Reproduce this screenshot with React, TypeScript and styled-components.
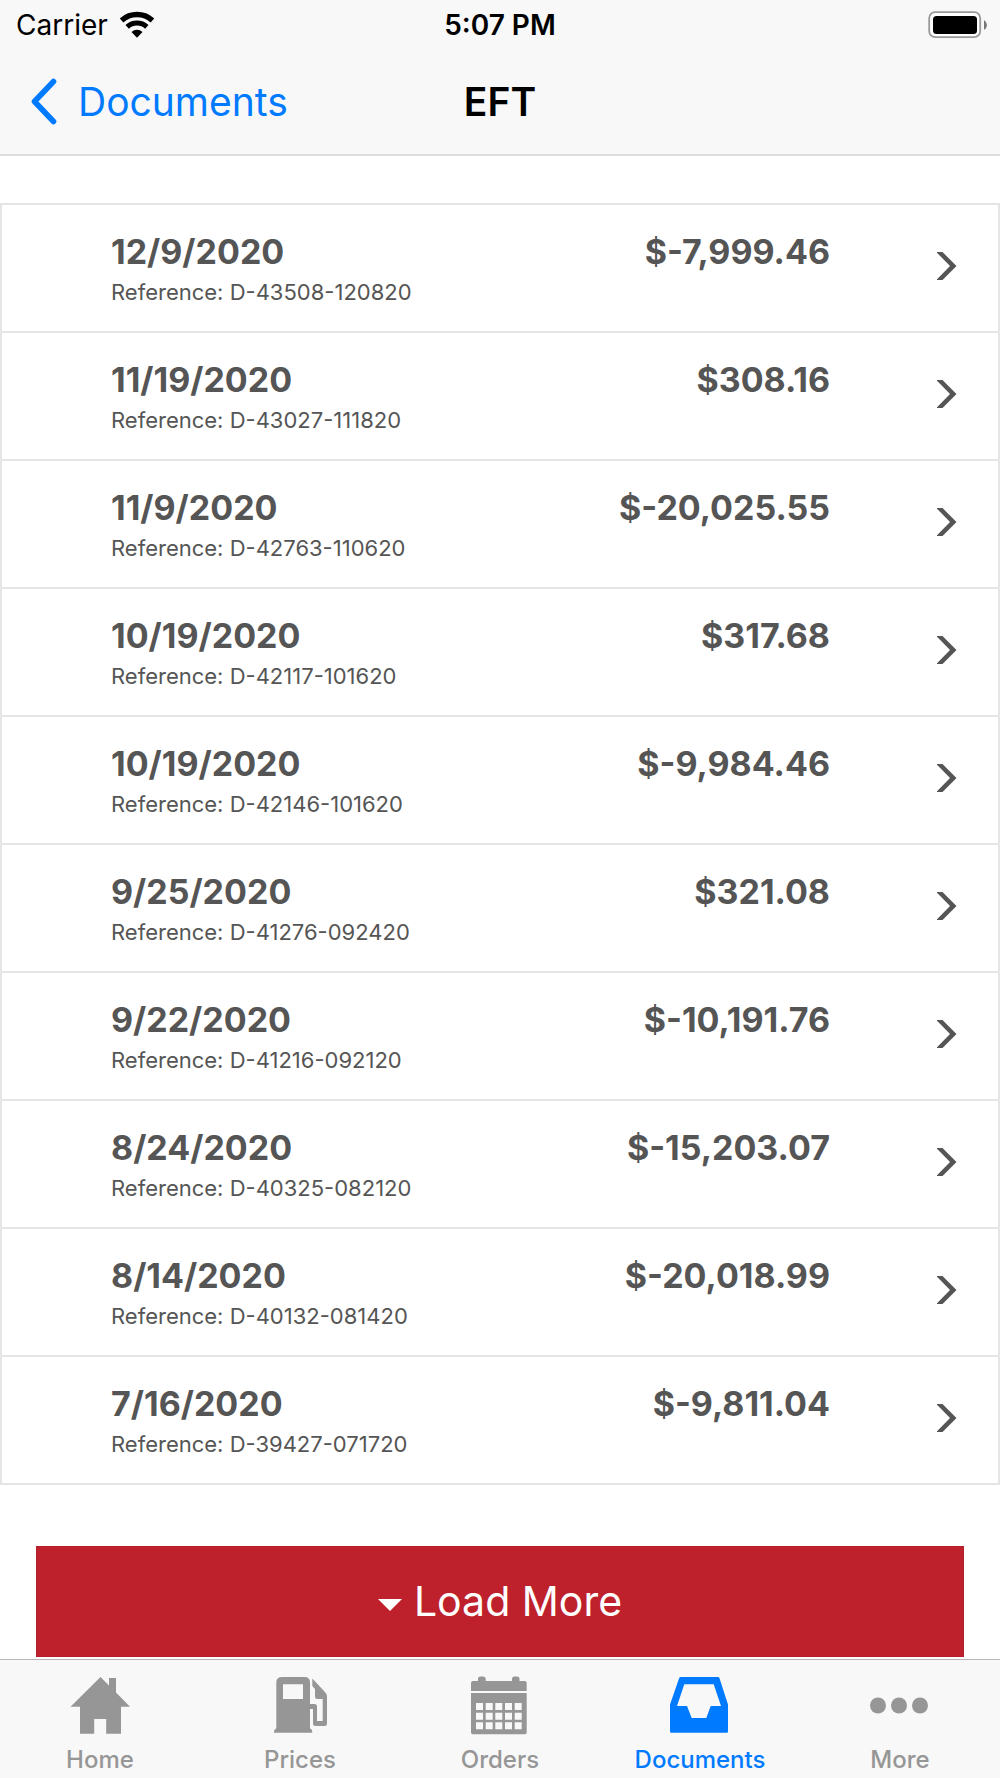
import React from "react";
import styled, { createGlobalStyle } from "styled-components";

const GlobalStyle = createGlobalStyle`
  *, *::before, *::after { box-sizing: border-box; }
  body {
    margin: 0;
    background: #fff;
    color: #000;
    font-family: Inter, "Liberation Sans", sans-serif;
  }
`;

const Screen = styled.div`
  min-height: 100vh;
  display: flex;
  flex-direction: column;
`;

const Header = styled.header`
  background: #f8f8f8;
  border-bottom: 2px solid #dcdcdc;
`;

const StatusBar = styled.div`
  display: grid;
  grid-template-columns: 1fr auto 1fr;
  align-items: center;
  height: 50px;
  padding: 0 12px;
  font-size: 28px;
  line-height: 32px;
`;

const Carrier = styled.div`
  display: flex;
  align-items: center;
  gap: 12px;
  padding-left: 4px;
`;

const Clock = styled.time`
  font-weight: 600;
`;

const BatterySlot = styled.div`
  display: flex;
  justify-content: flex-end;
`;

const NavBar = styled.nav`
  display: grid;
  grid-template-columns: 1fr auto 1fr;
  align-items: center;
  height: 104px;
  padding: 0 30px;
  font-size: 39px;
  line-height: 48px;
`;

const BackLink = styled.a`
  display: flex;
  align-items: center;
  gap: 20px;
  color: #007aff;
  text-decoration: none;
`;

const Title = styled.h1`
  margin: 0;
  font-size: inherit;
  font-weight: 600;
`;

const Content = styled.main`
  flex: 1;
  display: flex;
  flex-direction: column;
  padding: 47px 0 2px;
`;

const PaymentList = styled.ul`
  margin: 0;
  padding: 0;
  list-style: none;
  border: 2px solid #e5e5e5;
  border-bottom: 0;
`;

const PaymentItem = styled.li`
  border-bottom: 2px solid #e5e5e5;
`;

const PaymentLink = styled.a`
  display: grid;
  grid-template-columns: 1fr auto 20px;
  align-items: center;
  height: 126px;
  padding: 0 41px 4px 109px;
  color: #555;
  text-decoration: none;
`;

const PaymentInfo = styled.div`
  display: flex;
  flex-direction: column;
  padding-top: 8px;
`;

const Strong = styled.span`
  font-size: 34px;
  line-height: 44px;
  font-weight: 700;
`;

const Amount = styled(Strong)`
  align-self: start;
  margin: 25px 107px 0 0;
`;

const Reference = styled.span`
  font-size: 22px;
  line-height: 36px;
`;

const LoadMore = styled.button`
  display: flex;
  align-items: center;
  justify-content: center;
  gap: 12px;
  height: 111px;
  margin: 61px 36px 0;
  padding-bottom: 2px;
  border: 1px solid #b21e29;
  border-radius: 0;
  background: #be212b;
  color: #fff;
  font-family: inherit;
  font-size: 41px;
  line-height: 52px;
`;

const Caret = styled.span`
  border: 12px solid transparent;
  border-top-color: #fff;
  border-bottom: 0;
  margin-top: 8px;
`;

const TabBar = styled.nav`
  position: sticky;
  bottom: 0;
  display: grid;
  grid-template-columns: repeat(5, 1fr);
  height: 119px;
  border-top: 1px solid #b8b8b8;
  background: #f8f8f8;
`;

const Tab = styled.a<{ $active?: boolean }>`
  display: flex;
  flex-direction: column;
  align-items: center;
  gap: 8px;
  padding-top: 16px;
  color: ${({ $active }) => ($active ? "#007aff" : "#969696")};
  font-size: 24px;
  line-height: 32px;
  font-weight: 500;
  text-decoration: none;
`;

const WifiIcon = () => (
  <svg width="34" height="28" viewBox="0 0 34 28" aria-hidden="true">
    <g fill="none" stroke="#000">
      <path d="M1.5 9.5A23 23 0 0 1 32.5 9.5" strokeWidth="5.5" />
      <path d="M7.2 15.8A14.5 14.5 0 0 1 26.8 15.8" strokeWidth="5" />
    </g>
    <path d="M11.5 21A8 8 0 0 1 22.5 21L17 26.8Z" />
  </svg>
);

const BatteryIcon = () => (
  <svg width="60" height="28" viewBox="0 0 60 28" role="img" aria-label="Battery full">
    <rect x="1.2" y="1.2" width="51" height="25" rx="6" fill="#fff" stroke="#999" strokeWidth="1.8" />
    <rect x="5" y="5" width="44" height="18" rx="3.5" />
    <path d="M56 9Q59 11 59 14T56 19Z" fill="#777" />
  </svg>
);

const BackIcon = () => (
  <svg width="28" height="48" viewBox="0 0 28 48" aria-hidden="true">
    <path d="M22.5 3.5L3.5 23.5L22.5 43.5" fill="none" stroke="currentColor" strokeWidth="5.6" strokeLinecap="round" strokeLinejoin="round" transform="translate(1 0)" />
  </svg>
);

const RowChevron = () => (
  <svg width="20" height="28" viewBox="0 0 20 28" aria-hidden="true">
    <path d="M0 0H5.5L19.5 14L5.5 28H0V27.2L13 14L0 .8Z" fill="currentColor" />
  </svg>
);

const TabSvg = ({ children }: { children: React.ReactNode }) => (
  <svg width="60" height="60" viewBox="0 0 60 60" fill="currentColor" fillRule="evenodd" aria-hidden="true">
    {children}
  </svg>
);

const HomeIcon = () => (
  <TabSvg>
    <path d="M30.5 1L39 9.5V2H46V16.5L60 30.7H51V57.7H36.2V43H24.2V57.7H10V30.7H.5Z" />
  </TabSvg>
);

const PricesIcon = () => (
  <TabSvg>
    <path d="M6.3 6.5Q6.3 1 12 1H34.5Q40 1 40 6.5V52.5Q42.3 53 42.3 56.7H4Q4 53 6.3 52.5ZM13 8.2V23H33V8.2Z" />
    <path d="M40 28H44.5Q47 28 47 30.5V45H52.7V23H47.5Q45 23 45 20.5V13L42.3 10V2.5L54 15Q57 18 57 20V47.5Q57 50 54.5 50H45.5Q43 50 43 47.5V33H40Z" />
  </TabSvg>
);

const cellColumns = [6, 15.7, 25.3, 35, 44.7];
const cellRows = [27, 36.7, 46.3];
const calendarCells = cellRows.flatMap((y) => cellColumns.map((x) => `M${x} ${y}h7v7h-7Z`)).join("");

const OrdersIcon = () => (
  <TabSvg>
    <path d="M1 15V7Q1 5 3 5H8V3Q8 .5 10.5 .5H13Q15.7 .5 15.7 3V5H42V3Q42 .5 44.5 .5H47Q49.5 .5 49.5 3V5H54.7Q56.7 5 56.7 7V15Z" />
    <path d={`M1 17H56.7V56.5Q56.7 58.3 55 58.3H2.7Q1 58.3 1 56.5Z${calendarCells}`} />
  </TabSvg>
);

const DocumentsIcon = () => (
  <TabSvg>
    <path d="M11 1H48Q49 1 49.4 2L58 28.5V55.5Q58 56.7 56.8 56.7H1.2Q0 56.7 0 55.5V28.5L9.2 2Q9.6 1 11 1ZM14.3 8.3L7 30H17L21.7 42H36.3L40.7 30H51L43.7 8.3Z" />
  </TabSvg>
);

const MoreIcon = () => (
  <TabSvg>
    <circle cx="8" cy="29.5" r="8" />
    <circle cx="29" cy="29.5" r="8" />
    <circle cx="50" cy="29.5" r="8" />
  </TabSvg>
);

const payments = [
  { date: "12/9/2020", reference: "D-43508-120820", amount: "$-7,999.46" },
  { date: "11/19/2020", reference: "D-43027-111820", amount: "$308.16" },
  { date: "11/9/2020", reference: "D-42763-110620", amount: "$-20,025.55" },
  { date: "10/19/2020", reference: "D-42117-101620", amount: "$317.68" },
  { date: "10/19/2020", reference: "D-42146-101620", amount: "$-9,984.46" },
  { date: "9/25/2020", reference: "D-41276-092420", amount: "$321.08" },
  { date: "9/22/2020", reference: "D-41216-092120", amount: "$-10,191.76" },
  { date: "8/24/2020", reference: "D-40325-082120", amount: "$-15,203.07" },
  { date: "8/14/2020", reference: "D-40132-081420", amount: "$-20,018.99" },
  { date: "7/16/2020", reference: "D-39427-071720", amount: "$-9,811.04" },
];

const tabs = [
  { label: "Home", Icon: HomeIcon },
  { label: "Prices", Icon: PricesIcon },
  { label: "Orders", Icon: OrdersIcon },
  { label: "Documents", Icon: DocumentsIcon, active: true },
  { label: "More", Icon: MoreIcon },
];

export default function App() {
  return (
    <>
      <GlobalStyle />
      <Screen>
        <Header>
          <StatusBar>
            <Carrier>
              Carrier
              <WifiIcon />
            </Carrier>
            <Clock dateTime="17:07">5:07 PM</Clock>
            <BatterySlot>
              <BatteryIcon />
            </BatterySlot>
          </StatusBar>
          <NavBar>
            <BackLink href="#documents">
              <BackIcon />
              Documents
            </BackLink>
            <Title>EFT</Title>
          </NavBar>
        </Header>
        <Content>
          <PaymentList>
            {payments.map((payment) => (
              <PaymentItem key={payment.reference}>
                <PaymentLink href={`#${payment.reference}`}>
                  <PaymentInfo>
                    <Strong>{payment.date}</Strong>
                    <Reference>Reference: {payment.reference}</Reference>
                  </PaymentInfo>
                  <Amount>{payment.amount}</Amount>
                  <RowChevron />
                </PaymentLink>
              </PaymentItem>
            ))}
          </PaymentList>
          <LoadMore type="button">
            <Caret />
            Load More
          </LoadMore>
        </Content>
        <TabBar>
          {tabs.map(({ label, Icon, active }) => (
            <Tab key={label} href={`#${label.toLowerCase()}`} $active={active} aria-current={active ? "page" : undefined}>
              <Icon />
              {label}
            </Tab>
          ))}
        </TabBar>
      </Screen>
    </>
  );
}
